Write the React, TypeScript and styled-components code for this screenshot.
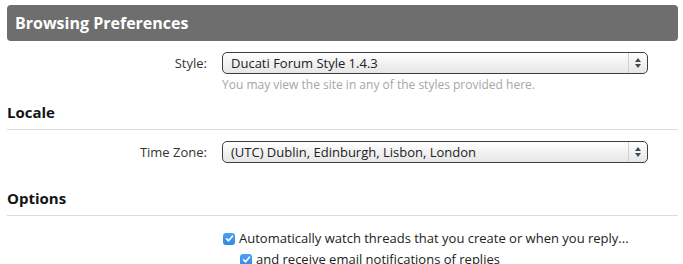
import styled, { createGlobalStyle } from 'styled-components';

const GlobalStyle = createGlobalStyle`
  body {
    margin: 0;
    background: #fff;
    font-family: 'Open Sans', 'Noto Sans', sans-serif;
    color: #141414;
  }
`;

const Page = styled.div`
  padding: 5px 5px 0 7px;
`;

const BlockHeader = styled.h3`
  margin: 0;
  height: 36px;
  padding: 0 8px;
  display: flex;
  align-items: center;
  background-color: #6e6e6e;
  border-radius: 4px;
  color: #fff;
  font-size: 16px;
  font-weight: 700;
`;

const SectionHeader = styled.h4<{ $top: number }>`
  margin: ${({ $top }) => $top}px 0 0;
  padding: 0 0 7px;
  border-bottom: 1px solid #dcdcdc;
  font-size: 15px;
  font-weight: 700;
  line-height: 20px;
  color: #141414;
`;

const Row = styled.dl`
  margin: 11px 0 0;
  display: grid;
  grid-template-columns: 200px 426px;
  column-gap: 15px;
  align-items: start;

  dt {
    text-align: right;
    font-size: 13px;
    line-height: 22px;
    color: #333;
  }

  dd {
    margin: 0;
  }
`;

const SelectBox = styled.div`
  height: 22px;
  box-sizing: border-box;
  display: flex;
  align-items: stretch;
  border: 1px solid #3a3f44;
  border-radius: 5px;
  background: linear-gradient(to bottom, #ffffff 0%, #f1f1f1 55%, #e6e6e6 100%);
  font-size: 13px;
  color: #222;
  overflow: hidden;
`;

const SelectValue = styled.span`
  flex: 1;
  padding-left: 8px;
  line-height: 20px;
`;

const SelectArrows = styled.span`
  width: 18px;
  border-left: 1px solid #d0d0d0;
  display: flex;
  align-items: center;
  justify-content: center;
`;

const Hint = styled.p`
  margin: 3px 0 0;
  font-size: 12px;
  color: #a6a6a6;
  line-height: 16px;
`;

const CheckList = styled.ul`
  list-style: none;
  margin: 12px 0 0;
  padding: 0 0 0 216px;
  font-size: 13px;
  line-height: 21px;
  color: #222;
`;

const CheckItem = styled.li<{ $indent?: boolean }>`
  display: flex;
  align-items: center;
  gap: 4px;
  padding-left: ${({ $indent }) => ($indent ? 17 : 0)}px;
`;

const Box = styled.span`
  width: 12px;
  height: 12px;
  border-radius: 3px;
  background: linear-gradient(to bottom, #4ca0f5, #2f86ea);
  display: inline-flex;
  align-items: center;
  justify-content: center;
  flex-shrink: 0;
`;

const Arrows = () => (
  <svg width="8" height="12" viewBox="0 0 8 12">
    <path d="M4 1 L7 5 L1 5 Z" fill="#3b4c59" />
    <path d="M4 11 L7 7 L1 7 Z" fill="#3b4c59" />
  </svg>
);

const Check = () => (
  <svg width="9" height="9" viewBox="0 0 9 9">
    <path d="M1.6 4.8 L3.6 6.8 L7.4 2.2" stroke="#fff" strokeWidth="1.7" fill="none" strokeLinecap="round" strokeLinejoin="round" />
  </svg>
);

const Select = ({ value }: { value: string }) => (
  <SelectBox>
    <SelectValue>{value}</SelectValue>
    <SelectArrows>
      <Arrows />
    </SelectArrows>
  </SelectBox>
);

export default function App() {
  return (
    <Page>
      <GlobalStyle />
      <BlockHeader>Browsing Preferences</BlockHeader>
      <Row>
        <dt>Style:</dt>
        <dd>
          <Select value='Ducati Forum Style 1.4.3' />
          <Hint>You may view the site in any of the styles provided here.</Hint>
        </dd>
      </Row>
      <SectionHeader $top={9}>Locale</SectionHeader>
      <Row>
        <dt>Time Zone:</dt>
        <dd>
          <Select value='(UTC) Dublin, Edinburgh, Lisbon, London' />
        </dd>
      </Row>
      <SectionHeader $top={25}>Options</SectionHeader>
      <CheckList>
        <CheckItem>
          <Box>
            <Check />
          </Box>
          Automatically watch threads that you create or when you reply...
        </CheckItem>
        <CheckItem $indent>
          <Box>
            <Check />
          </Box>
          and receive email notifications of replies
        </CheckItem>
      </CheckList>
    </Page>
  );
}
